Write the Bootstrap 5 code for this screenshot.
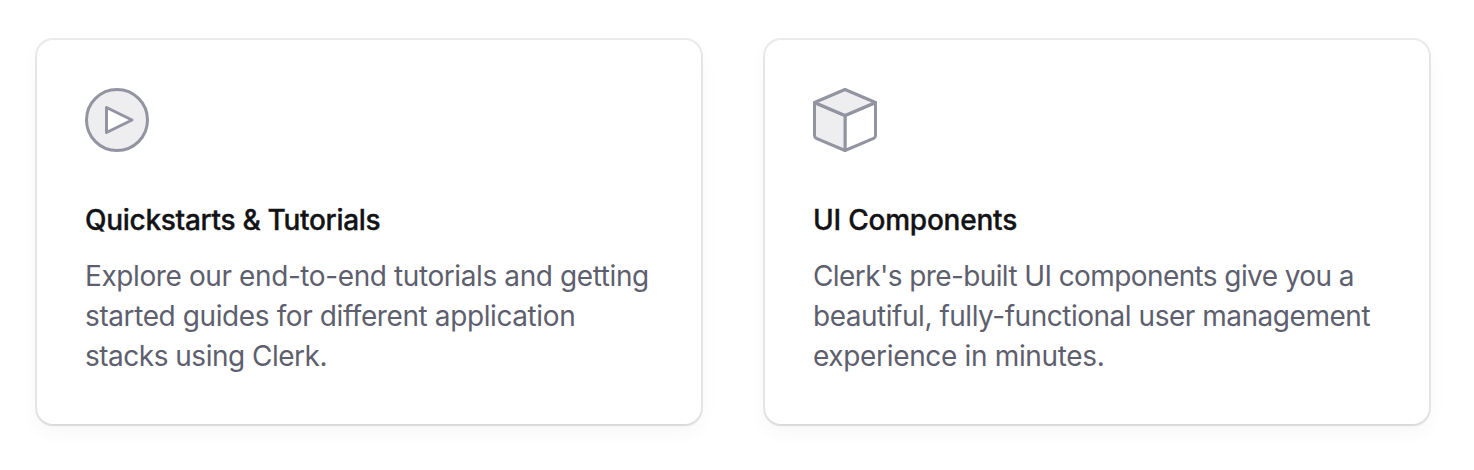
<!DOCTYPE html>
<html lang="en">
<head>
<meta charset="utf-8">
<meta name="viewport" content="width=device-width, initial-scale=1">
<title>Clerk guides</title>
<link rel="stylesheet" href="https://cdn.jsdelivr.net/npm/bootstrap@5.3.0/dist/css/bootstrap.min.css">
<style>
body{background:#fff;font-family:Inter,"Liberation Sans",sans-serif}
.guides{padding:40px 45px 46px 37px;display:grid;grid-template-columns:664px 664px;gap:64px}
.guide{height:384px;padding:48px;border-radius:16px;border:0;box-shadow:0 0 0 2px rgba(0,0,0,.08),0 2px 3px rgba(0,0,0,.055),0 8px 20px rgba(0,0,0,.04);background:#fff}
.guide-title{font-size:28px;line-height:40px;font-weight:500;color:#131316;margin:48px 0 16px;white-space:nowrap;-webkit-text-stroke:.35px currentColor}
.guide-text{font-size:28px;line-height:40px;color:#5e5f6e;margin:0;white-space:nowrap}
.guide svg{display:block}
.t1{letter-spacing:-.3px}.t2{letter-spacing:-.22px}
.a1{letter-spacing:-.4px}.a2{letter-spacing:-.4px}.a3{letter-spacing:-.5px}
.b1{letter-spacing:-.6px}.b2{letter-spacing:-.475px}.b3{letter-spacing:-.34px}
</style>
</head>
<body>
<main class="guides">
<article class="card guide">
<svg width="64" height="64" viewBox="0 0 64 64" fill="#eeeef0" stroke="#9394a1" stroke-width="3" stroke-linejoin="round"><circle cx="32" cy="32" r="30.5"/><path fill="#fff" d="M21.500 19.500v25L47 32z"/></svg>
<h2 class="guide-title"><span class="t1">Quickstarts &amp; Tutorials</span></h2>
<p class="guide-text"><span class="a1">Explore our end-to-end tutorials and getting</span><br><span class="a2">started guides for different application</span><br><span class="a3">stacks using Clerk.</span></p>
</article>
<article class="card guide">
<svg width="64" height="64" viewBox="0 0 64 64" fill="#eeeef0" stroke="#9394a1" stroke-width="3" stroke-linejoin="round"><path fill="#fff" d="M32 27.500 62.500 14.500V47.500Q62.500 49.500 60.700 50.300L32 62.500z"/><path d="M32 27.500 1.500 14.500V47.500Q1.500 49.500 3.300 50.300L32 62.500z"/><path d="M32 1.500 62.500 14.500 32 27.500 1.500 14.500z"/></svg>
<h2 class="guide-title"><span class="t2">UI Components</span></h2>
<p class="guide-text"><span class="b1">Clerk's pre-built UI components give you a</span><br><span class="b2">beautiful, fully-functional user management</span><br><span class="b3">experience in minutes.</span></p>
</article>
</main>
<script src="https://cdn.jsdelivr.net/npm/bootstrap@5.3.0/dist/js/bootstrap.bundle.min.js"></script>
</body>
</html>
